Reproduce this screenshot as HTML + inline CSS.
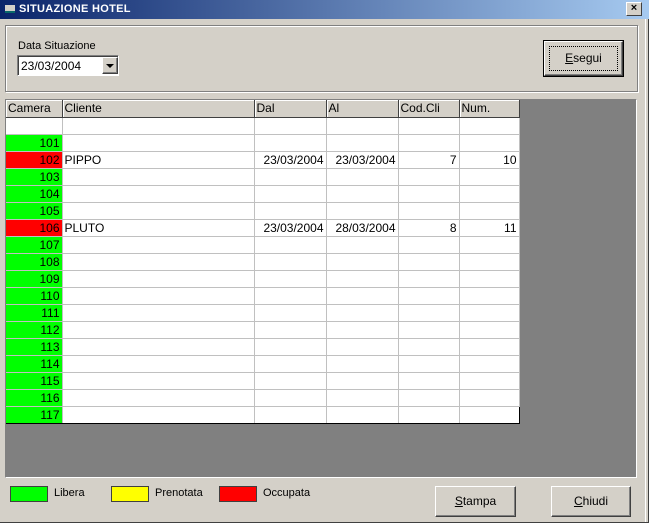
<!DOCTYPE html>
<html><head><meta charset="utf-8"><style>
*{margin:0;padding:0;box-sizing:border-box}
body{width:649px;height:523px;background:#d4d0c8;font-family:"Liberation Sans",sans-serif;font-size:12px;color:#000;position:relative;overflow:hidden}
.a{position:absolute}
.title{left:0;top:0;width:649px;height:19px;background:linear-gradient(90deg,#0a246a,#a6caf0);color:#fff;font-weight:bold;font-size:11px;line-height:19px;padding-left:19px;letter-spacing:0.3px}
.x{left:626px;top:2px;width:16px;height:14px;background:#d4d0c8;border:1px solid;border-color:#fff #404040 #404040 #fff;font-size:11px;line-height:11px;text-align:center;font-weight:bold;color:#000}
.frame{left:5px;top:25px;width:633px;height:67px;border:1px solid #808080;box-shadow:1px 1px 0 #fff inset,1px 1px 0 #fff}
.btn{background:#d4d0c8;border:1px solid;border-color:#fff #404040 #404040 #fff;box-shadow:inset -1px -1px 0 #808080;text-align:center;font-size:12px}
table{border-collapse:collapse;position:absolute;left:6px;top:100px;background:#fff;table-layout:fixed}
td{height:17px;border-right:1px solid #c0c0c0;border-bottom:1px solid #c0c0c0;padding:0 2px;font-size:12px;white-space:nowrap;overflow:hidden}
th{height:17px;background:#d4d0c8;font-weight:normal;text-align:left;padding:0 2px;border-right:1px solid #404040;border-bottom:1px solid #404040;box-shadow:inset 1px 1px 0 #fff;font-size:12px;overflow:hidden;white-space:nowrap}
.g{background:#00ff00;text-align:right}
.r{background:#ff0000;text-align:right}
.n{text-align:right}
</style></head><body>
<div class="a title">SITUAZIONE HOTEL</div>
<div class="a" style="left:5px;top:5px;width:10px;height:8px;background:#d4d0c8;border-bottom:2px solid #0a6a6a"></div>
<div class="a x">×</div>
<div class="a frame"></div>
<div class="a" style="left:18px;top:40px;font-size:11px">Data Situazione</div>
<div class="a" style="left:17px;top:55px;width:102px;height:21px;background:#fff;border:1px solid;border-color:#808080 #fff #fff #808080;box-shadow:inset 1px 1px 0 #404040;padding:3px 3px;font-size:12px">23/03/2004</div>
<div class="a btn" style="left:102px;top:57px;width:16px;height:17px"><div style="margin:6px auto 0;width:0;height:0;border-left:4px solid transparent;border-right:4px solid transparent;border-top:4px solid #000"></div></div>
<div class="a" style="left:543px;top:40px;width:81px;height:37px;border:1px solid #000"></div>
<div class="a btn" style="left:544px;top:41px;width:79px;height:35px;line-height:33px"><span style="border:1px dotted #000;display:inline-block;width:69px;height:25px;line-height:23px;margin-top:4px"><u>E</u>segui</span></div>
<div class="a" style="left:5px;top:99px;width:632px;height:379px;background:#808080;border:1px solid;border-color:#808080 #fff #fff #808080"></div>
<table>
<colgroup><col style="width:56px"><col style="width:192px"><col style="width:72px"><col style="width:72px"><col style="width:61px"><col style="width:60px"></colgroup>
<tr><th>Camera</th><th>Cliente</th><th>Dal</th><th>Al</th><th>Cod.Cli</th><th>Num.</th></tr>
<tr><td></td><td></td><td></td><td></td><td></td><td></td></tr>
<tr><td class="g">101</td><td></td><td></td><td></td><td></td><td></td></tr>
<tr><td class="r">102</td><td>PIPPO</td><td class="n">23/03/2004</td><td class="n">23/03/2004</td><td class="n">7</td><td class="n">10</td></tr>
<tr><td class="g">103</td><td></td><td></td><td></td><td></td><td></td></tr>
<tr><td class="g">104</td><td></td><td></td><td></td><td></td><td></td></tr>
<tr><td class="g">105</td><td></td><td></td><td></td><td></td><td></td></tr>
<tr><td class="r">106</td><td>PLUTO</td><td class="n">23/03/2004</td><td class="n">28/03/2004</td><td class="n">8</td><td class="n">11</td></tr>
<tr><td class="g">107</td><td></td><td></td><td></td><td></td><td></td></tr>
<tr><td class="g">108</td><td></td><td></td><td></td><td></td><td></td></tr>
<tr><td class="g">109</td><td></td><td></td><td></td><td></td><td></td></tr>
<tr><td class="g">110</td><td></td><td></td><td></td><td></td><td></td></tr>
<tr><td class="g">111</td><td></td><td></td><td></td><td></td><td></td></tr>
<tr><td class="g">112</td><td></td><td></td><td></td><td></td><td></td></tr>
<tr><td class="g">113</td><td></td><td></td><td></td><td></td><td></td></tr>
<tr><td class="g">114</td><td></td><td></td><td></td><td></td><td></td></tr>
<tr><td class="g">115</td><td></td><td></td><td></td><td></td><td></td></tr>
<tr><td class="g">116</td><td></td><td></td><td></td><td></td><td></td></tr>
<tr><td class="g" style="border-bottom:1px solid #000">117</td><td style="border-bottom:1px solid #000"></td><td style="border-bottom:1px solid #000"></td><td style="border-bottom:1px solid #000"></td><td style="border-bottom:1px solid #000"></td><td style="border-bottom:1px solid #000;border-right:1px solid #000"></td></tr>
</table>
<div class="a" style="left:10px;top:486px;width:38px;height:16px;background:#00ff00;border:1px solid #404040"></div>
<div class="a" style="left:54px;top:487px;font-size:11px">Libera</div>
<div class="a" style="left:111px;top:486px;width:38px;height:16px;background:#ffff00;border:1px solid #404040"></div>
<div class="a" style="left:155px;top:487px;font-size:11px">Prenotata</div>
<div class="a" style="left:219px;top:486px;width:38px;height:16px;background:#ff0000;border:1px solid #404040"></div>
<div class="a" style="left:263px;top:487px;font-size:11px">Occupata</div>
<div class="a btn" style="left:435px;top:486px;width:81px;height:31px;line-height:29px"><u>S</u>tampa</div>
<div class="a btn" style="left:551px;top:486px;width:80px;height:31px;line-height:29px"><u>C</u>hiudi</div>
<div class="a" style="left:645px;top:19px;width:4px;height:504px;border-right:1px solid #404040;border-left:1px solid #fff"></div>
<div class="a" style="left:0;top:521px;width:649px;height:2px;border-bottom:1px solid #404040"></div>
</body></html>
